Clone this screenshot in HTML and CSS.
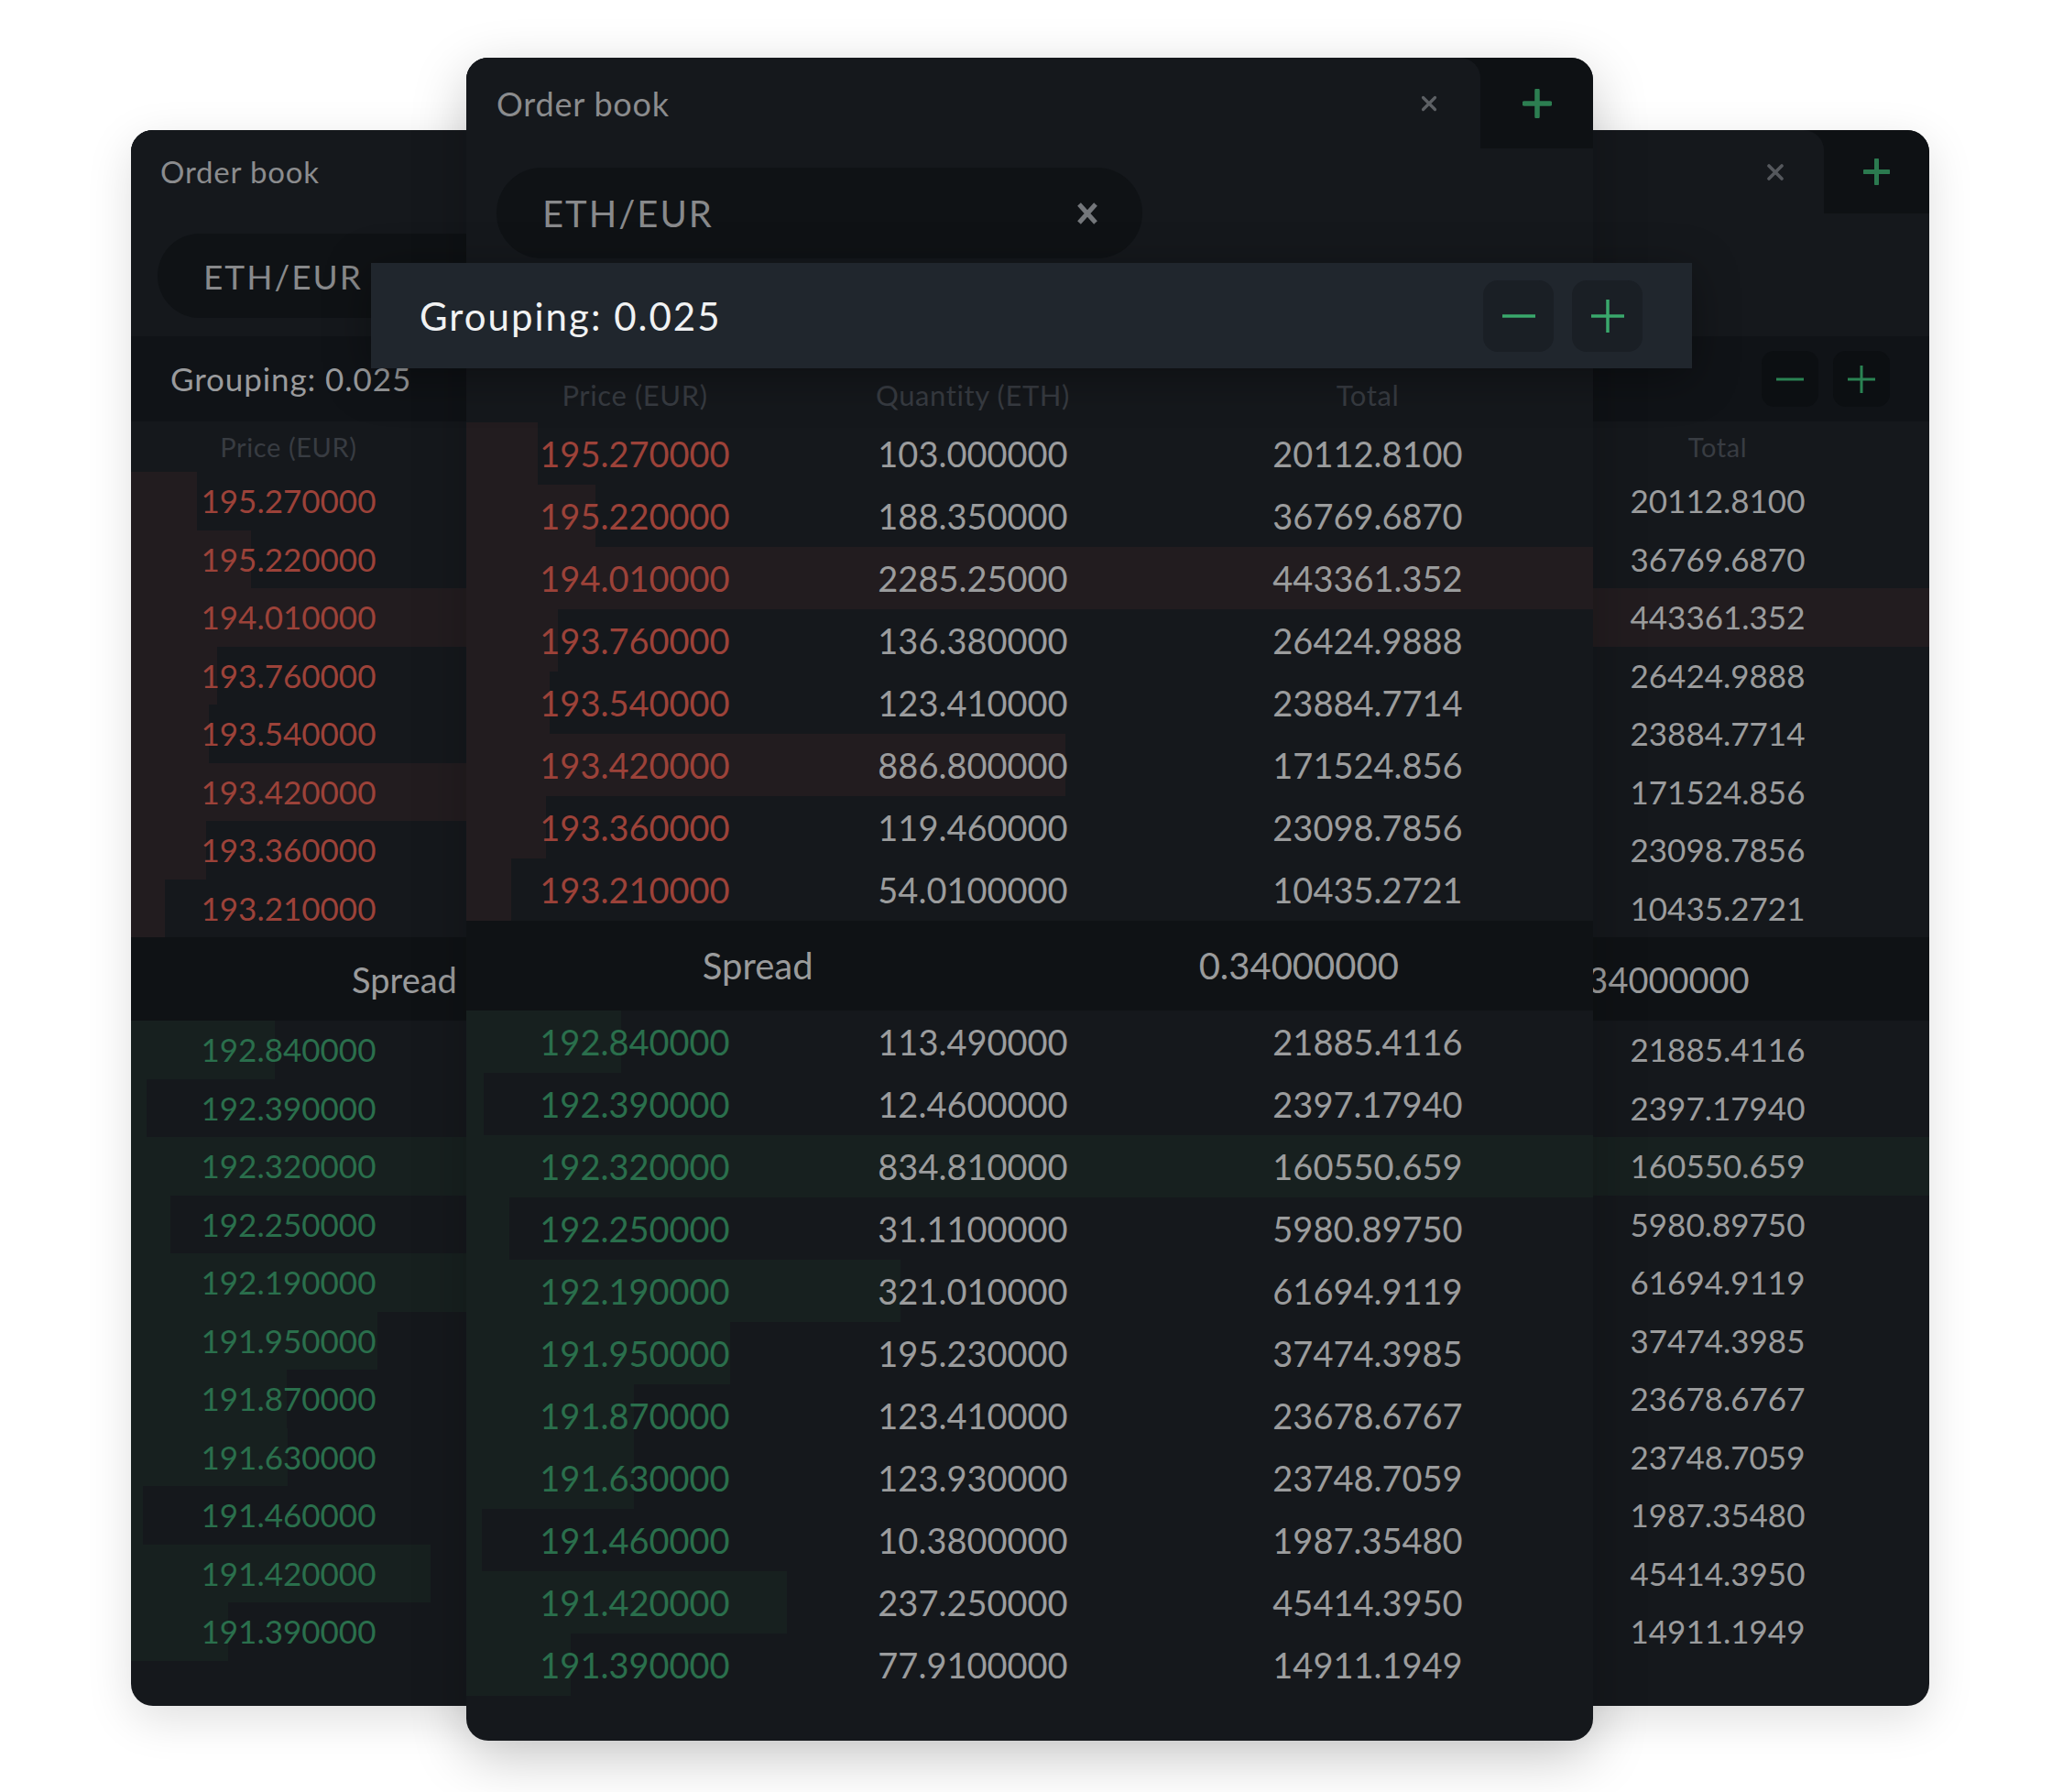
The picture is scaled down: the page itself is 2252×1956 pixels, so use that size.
FILE: index.html
```html
<!DOCTYPE html>
<html lang="en">
<head>
<meta charset="utf-8">
<title>Order book</title>
<link rel="stylesheet" href="styles.css">
</head>
<body>
<div class="stage">

  <!-- Back (wide) order book; its quantity column lies hidden under the front card -->
  <section class="card card-back">
    <header class="head">
      <div class="tab">
        <span class="title">Order book</span>
        <svg class="ic" width="18" height="18" viewBox="0 0 18 18"><path d="M2 2L16 16M16 2L2 16" stroke="#55585d" stroke-width="3.6" stroke-linecap="round"/></svg>
      </div>
      <div class="plusbox">
        <svg width="29" height="29" viewBox="0 0 29 29"><path d="M14.5 1.5v26M1.5 14.5h26" stroke="#2b7a4f" stroke-width="5" stroke-linecap="round"/></svg>
      </div>
    </header>
    <div class="pill"><span class="pill-text">ETH/EUR</span></div>
    <div class="grouping">
      <span class="grouping-text">Grouping: 0.025</span>
      <button class="gbtn"><svg width="30" height="30" viewBox="0 0 30 30"><path d="M0 15h30" stroke="#2a8353" stroke-width="3"/></svg></button>
      <button class="gbtn"><svg width="30" height="30" viewBox="0 0 30 30"><path d="M15 0v30M0 15h30" stroke="#2a8353" stroke-width="3"/></svg></button>
    </div>
    <div class="cols"><span>Price (EUR)</span><span></span><span>Total</span></div>
    <div class="book">
      <div class="row ask" style="--w:72px"><span class="p">195.270000</span><span></span><span>20112.8100</span></div>
      <div class="row ask" style="--w:131px"><span class="p">195.220000</span><span></span><span>36769.6870</span></div>
      <div class="row ask" style="--w:100%"><span class="p">194.010000</span><span></span><span>443361.352</span></div>
      <div class="row ask" style="--w:94px"><span class="p">193.760000</span><span></span><span>26424.9888</span></div>
      <div class="row ask" style="--w:85px"><span class="p">193.540000</span><span></span><span>23884.7714</span></div>
      <div class="row ask" style="--w:1043px"><span class="p">193.420000</span><span></span><span>171524.856</span></div>
      <div class="row ask" style="--w:82px"><span class="p">193.360000</span><span></span><span>23098.7856</span></div>
      <div class="row ask" style="--w:37px"><span class="p">193.210000</span><span></span><span>10435.2721</span></div>
      <div class="spread"><span>Spread</span><span></span><span>0.34000000</span></div>
      <div class="row bid" style="--w:157px"><span class="p">192.840000</span><span></span><span>21885.4116</span></div>
      <div class="row bid" style="--w:17px"><span class="p">192.390000</span><span></span><span>2397.17940</span></div>
      <div class="row bid" style="--w:100%"><span class="p">192.320000</span><span></span><span>160550.659</span></div>
      <div class="row bid" style="--w:43px"><span class="p">192.250000</span><span></span><span>5980.89750</span></div>
      <div class="row bid" style="--w:757px"><span class="p">192.190000</span><span></span><span>61694.9119</span></div>
      <div class="row bid" style="--w:269px"><span class="p">191.950000</span><span></span><span>37474.3985</span></div>
      <div class="row bid" style="--w:170px"><span class="p">191.870000</span><span></span><span>23678.6767</span></div>
      <div class="row bid" style="--w:171px"><span class="p">191.630000</span><span></span><span>23748.7059</span></div>
      <div class="row bid" style="--w:13px"><span class="p">191.460000</span><span></span><span>1987.35480</span></div>
      <div class="row bid" style="--w:327px"><span class="p">191.420000</span><span></span><span>45414.3950</span></div>
      <div class="row bid" style="--w:106px"><span class="p">191.390000</span><span></span><span>14911.1949</span></div>
    </div>
  </section>

  <!-- Front order book -->
  <section class="card card-front">
    <header class="head">
      <div class="tab">
        <span class="title">Order book</span>
        <svg class="ic" width="18" height="18" viewBox="0 0 18 18"><path d="M2.5 2.5L15.5 15.5M15.5 2.5L2.5 15.5" stroke="#5d6064" stroke-width="3.2" stroke-linecap="round"/></svg>
      </div>
      <div class="plusbox">
        <svg width="32" height="32" viewBox="0 0 32 32"><path d="M16 2v28M2 16h28" stroke="#2c7e51" stroke-width="5.5" stroke-linecap="round"/></svg>
      </div>
    </header>
    <div class="pill">
      <span class="pill-text">ETH/EUR</span>
      <svg width="24" height="24" viewBox="0 0 24 24"><path d="M3 2L21 22M21 2L3 22" stroke="#74777b" stroke-width="5"/></svg>
    </div>
    <div class="grouping">
      <span class="grouping-text">Grouping: 0.025</span>
      <button class="gbtn"><svg width="38" height="38" viewBox="0 0 38 38"><path d="M1 19h36" stroke="#3aa86c" stroke-width="3.5"/></svg></button>
      <button class="gbtn"><svg width="38" height="38" viewBox="0 0 38 38"><path d="M19 1v36M1 19h36" stroke="#3aa86c" stroke-width="3.5"/></svg></button>
    </div>
    <div class="cols"><span>Price (EUR)</span><span>Quantity (ETH)</span><span>Total</span></div>
    <div class="book">
      <div class="row ask" style="--w:78px"><span class="p">195.270000</span><span>103.000000</span><span>20112.8100</span></div>
      <div class="row ask" style="--w:141px"><span class="p">195.220000</span><span>188.350000</span><span>36769.6870</span></div>
      <div class="row ask" style="--w:100%"><span class="p">194.010000</span><span>2285.25000</span><span>443361.352</span></div>
      <div class="row ask" style="--w:100px"><span class="p">193.760000</span><span>136.380000</span><span>26424.9888</span></div>
      <div class="row ask" style="--w:91px"><span class="p">193.540000</span><span>123.410000</span><span>23884.7714</span></div>
      <div class="row ask" style="--w:654px"><span class="p">193.420000</span><span>886.800000</span><span>171524.856</span></div>
      <div class="row ask" style="--w:87px"><span class="p">193.360000</span><span>119.460000</span><span>23098.7856</span></div>
      <div class="row ask" style="--w:49px"><span class="p">193.210000</span><span>54.0100000</span><span>10435.2721</span></div>
      <div class="spread"><span>Spread</span><span>0.34000000</span></div>
      <div class="row bid" style="--w:169px"><span class="p">192.840000</span><span>113.490000</span><span>21885.4116</span></div>
      <div class="row bid" style="--w:19px"><span class="p">192.390000</span><span>12.4600000</span><span>2397.17940</span></div>
      <div class="row bid" style="--w:100%"><span class="p">192.320000</span><span>834.810000</span><span>160550.659</span></div>
      <div class="row bid" style="--w:47px"><span class="p">192.250000</span><span>31.1100000</span><span>5980.89750</span></div>
      <div class="row bid" style="--w:474px"><span class="p">192.190000</span><span>321.010000</span><span>61694.9119</span></div>
      <div class="row bid" style="--w:288px"><span class="p">191.950000</span><span>195.230000</span><span>37474.3985</span></div>
      <div class="row bid" style="--w:183px"><span class="p">191.870000</span><span>123.410000</span><span>23678.6767</span></div>
      <div class="row bid" style="--w:183px"><span class="p">191.630000</span><span>123.930000</span><span>23748.7059</span></div>
      <div class="row bid" style="--w:17px"><span class="p">191.460000</span><span>10.3800000</span><span>1987.35480</span></div>
      <div class="row bid" style="--w:350px"><span class="p">191.420000</span><span>237.250000</span><span>45414.3950</span></div>
      <div class="row bid" style="--w:114px"><span class="p">191.390000</span><span>77.9100000</span><span>14911.1949</span></div>
    </div>
  </section>

</div>
</body>
</html>
```

FILE: styles.css
```css
* {
  box-sizing: border-box;
  margin: 0;
  padding: 0;
}

html, body {
  background: #ffffff;
}

body {
  font-family: Lato, "Open Sans", sans-serif;
  line-height: 1;
}

.stage {
  position: relative;
  width: 2252px;
  height: 1956px;
  overflow: hidden;
}

/* ---------- cards (windows on a canvas) ---------- */
.card {
  position: absolute;
  display: flex;
  flex-direction: column;
  background: #15181c;
  border-radius: 24px;
}

.card-back {
  left: 143px;
  top: 142px;
  width: 1963px;
  height: 1720px;
  box-shadow: 0 14px 50px rgba(0, 0, 0, 0.13);
}

.card-front {
  left: 509px;
  top: 63px;
  width: 1230px;
  height: 1837px;
  box-shadow: 0 18px 60px rgba(0, 0, 0, 0.22);
}

/* ---------- header ---------- */
.head {
  display: flex;
  flex: none;
  background: #0e1114;
  border-radius: 24px 24px 0 0;
}

.tab {
  flex: 1;
  display: flex;
  align-items: center;
  justify-content: space-between;
  background: #15181c;
  border-radius: 24px 22px 0 0;
}

.title {
  color: #8b8c8e;
}

.plusbox {
  display: flex;
  align-items: center;
  justify-content: center;
  border-top-right-radius: 24px;
}

.card-front .head { height: 99px; }
.card-front .tab { padding: 0 47px 0 33px; }
.card-front .title { font-size: 36px; letter-spacing: 0.8px; }
.card-front .plusbox { width: 123px; }

.card-back .head { height: 91px; }
.card-back .tab { padding: 0 44px 0 32px; }
.card-back .title { font-size: 33px; letter-spacing: 0.8px; }
.card-back .plusbox { width: 115px; }

/* ---------- pair pill ---------- */
.pill {
  display: flex;
  align-items: center;
  justify-content: space-between;
  flex: none;
  background: #0f1215;
  border-radius: 60px;
}

.pill-text {
  color: #88898b;
}

.card-front .pill {
  margin: 21px 0 0 33px;
  width: 705px;
  height: 99px;
  padding: 0 48px 0 50px;
}
.card-front .pill-text { font-size: 40px; letter-spacing: 2px; }

.card-back .pill {
  margin: 22px 0 0 29px;
  width: 1000px;
  height: 92px;
  padding: 0 48px 0 50px;
}
.card-back .pill-text { font-size: 37px; letter-spacing: 2px; }

/* ---------- grouping ---------- */
.grouping {
  display: flex;
  align-items: center;
  flex: none;
}

.grouping-text {
  flex: 1;
}

.gbtn {
  display: flex;
  align-items: center;
  justify-content: center;
  border: 0;
}

.card-front .grouping {
  position: relative;
  margin: 5px -108px 0 -104px;
  height: 115px;
  padding: 0 54px 0 53px;
  gap: 20px;
  background: #20262d;
  box-shadow: 0 10px 50px rgba(0, 0, 0, 0.35);
}
.card-front .grouping-text {
  font-size: 42px;
  letter-spacing: 2px;
  color: #f1f2f3;
}
.card-front .gbtn {
  width: 77px;
  height: 78px;
  border-radius: 16px;
  background: #1a1f25;
}

.card-back .grouping {
  margin-top: 20px;
  height: 93px;
  padding: 0 43px;
  gap: 16px;
  background: #101317;
}
.card-back .grouping-text {
  font-size: 35px;
  letter-spacing: 0.9px;
  color: #9a9b9d;
}
.card-back .gbtn {
  width: 62px;
  height: 61px;
  border-radius: 14px;
  background: #0c0f12;
}

/* ---------- columns / rows ---------- */
.cols,
.row {
  display: grid;
  align-items: center;
  justify-items: center;
}

.card-front .cols,
.card-front .row {
  grid-template-columns: 368px 370px 1fr;
}

.card-back .cols,
.card-back .row {
  grid-template-columns: 344px 1157px 1fr;
}

.cols {
  flex: none;
  color: #383c42;
}
.card-front .cols { height: 59px; font-size: 31px; letter-spacing: 0.6px; }
.card-back .cols { height: 55px; font-size: 29px; letter-spacing: 0.6px; }

.book {
  display: flex;
  flex-direction: column;
}

.row {
  color: #9b9c9d;
  background: linear-gradient(to right, var(--bar) var(--w, 0px), transparent var(--w, 0px));
}

.ask { --bar: #221c1f; }
.bid { --bar: #17201f; }

.ask .p { color: #9c4239; }
.bid .p { color: #2a6f4c; }

.card-front .row { height: 68px; font-size: 38px; }
.card-back .row { height: 63.5px; font-size: 35px; }

/* ---------- spread ---------- */
.spread {
  display: grid;
  align-items: center;
  justify-items: center;
  background: #0f1215;
  color: #9a9b9c;
}

.card-front .spread {
  height: 98px;
  grid-template-columns: 1fr 1fr;
  padding: 0 26px 0 23px;
  font-size: 40px;
}

.card-back .spread {
  height: 91px;
  grid-template-columns: 597px 866px 400px 1fr;
  font-size: 38px;
}
```
